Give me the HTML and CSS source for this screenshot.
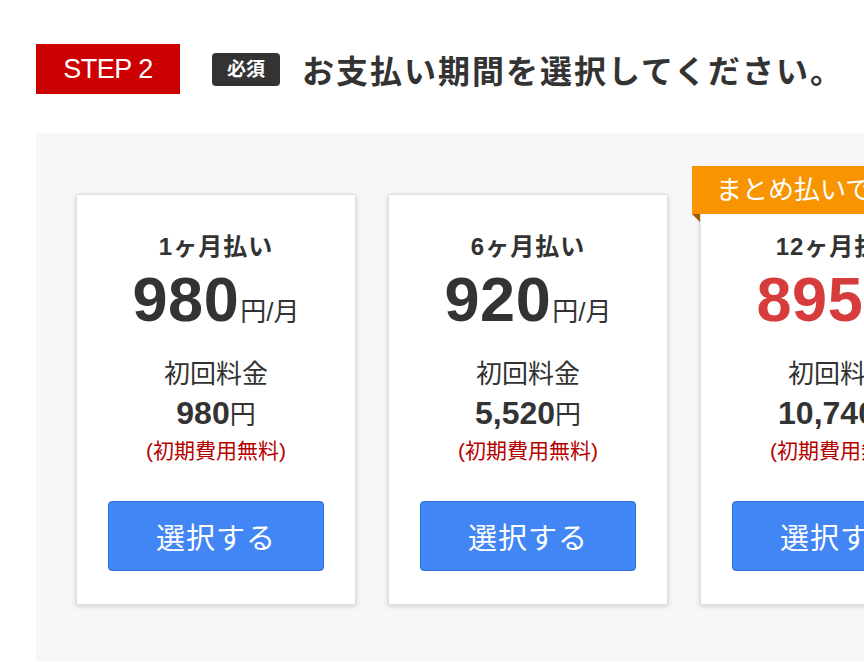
FILE: index.html
```html
<!DOCTYPE html>
<html lang="ja">
<head>
  <meta charset="UTF-8" />
  <meta name="viewport" content="width=device-width, initial-scale=1.0"/>
  <title>お支払い期間</title>
  <link rel="stylesheet" href="styles.css">
</head>
<body>
  <div class="step-head">
    <div class="step-label">STEP 2</div>
    <span class="required">必須</span>
    <h2>お支払い期間を選択してください。</h2>
  </div>

  <div class="plans">
    <div class="plan">
      <div class="plan-name">1ヶ月払い</div>
      <div class="price"><span class="num">980</span><span class="unit">円/月</span></div>
      <div class="first-label">初回料金</div>
      <div class="first-price"><span class="num">980</span>円</div>
      <div class="note">(初期費用無料)</div>
      <button class="select-btn">選択する</button>
    </div>

    <div class="plan">
      <div class="plan-name">6ヶ月払い</div>
      <div class="price"><span class="num">920</span><span class="unit">円/月</span></div>
      <div class="first-label">初回料金</div>
      <div class="first-price"><span class="num">5,520</span>円</div>
      <div class="note">(初期費用無料)</div>
      <button class="select-btn">選択する</button>
    </div>

    <div class="plan recommended">
      <div class="ribbon">まとめ払いでおトク！</div>
      <div class="plan-name">12ヶ月払い</div>
      <div class="price"><span class="num">895</span><span class="unit">円/月</span></div>
      <div class="first-label">初回料金</div>
      <div class="first-price"><span class="num">10,740</span>円</div>
      <div class="note">(初期費用無料)</div>
      <button class="select-btn">選択する</button>
    </div>
  </div>
</body>
</html>
```

FILE: styles.css
```css
body {
  margin: 0;
  background: #fff;
  font-family: 'Liberation Sans', 'Noto Sans CJK JP', sans-serif;
  color: #333;
  overflow: hidden;
}
.step-head {
  display: flex;
  align-items: center;
  padding: 44px 0 0 36px;
}
.step-label {
  width: 144px;
  height: 50px;
  line-height: 50px;
  background: #cc0000;
  color: #fff;
  font-size: 27px;
  text-align: center;
  letter-spacing: -0.5px;
}
.required {
  margin-left: 32px;
  width: 68px;
  height: 33px;
  line-height: 33px;
  background: #333;
  color: #fff;
  border-radius: 4px;
  text-align: center;
  font-size: 19px;
  font-weight: bold;
}
h2 {
  margin: 0 0 0 22px;
  font-size: 32px;
  font-weight: bold;
  color: #333;
  letter-spacing: 2px;
}
.plans {
  display: flex;
  gap: 32px;
  margin: 39px 0 0 36px;
  padding: 61px 0 56px 40px;
  background: #f7f7f7;
  width: 1200px;
}
.plan {
  position: relative;
  flex: 0 0 280px;
  height: 411px;
  box-sizing: border-box;
  background: #fff;
  border: 1px solid #e0e0e0;
  box-shadow: 0 1px 5px rgba(0, 0, 0, 0.18);
  text-align: center;
  padding-top: 33px;
}
.plan-name {
  font-size: 24px;
  font-weight: bold;
  line-height: 38px;
  letter-spacing: 1px;
}
.price {
  line-height: 66px;
}
.price .num {
  font-size: 63px;
  font-weight: bold;
  letter-spacing: 0.5px;
}
.price .unit {
  font-size: 26px;
  margin-left: 1px;
}
.recommended .price {
  color: #d63c3c;
}
.first-label {
  margin-top: 6px;
  font-size: 26px;
  line-height: 38px;
}
.first-price {
  font-size: 26px;
  line-height: 40px;
}
.first-price .num {
  font-size: 32px;
  font-weight: bold;
}
.note {
  color: #b50000;
  font-size: 21px;
  line-height: 32px;
}
.select-btn {
  margin-top: 34px;
  width: 216px;
  height: 70px;
  background: #4285f4;
  border: 1px solid #2a6fe0;
  border-radius: 4px;
  color: #fff;
  font-family: inherit;
  font-size: 29px;
  letter-spacing: 1px;
  cursor: pointer;
}
.ribbon {
  position: absolute;
  top: -29px;
  left: -9px;
  width: 300px;
  height: 48px;
  line-height: 48px;
  background: #f79400;
  color: #fff;
  font-size: 26px;
  text-align: left;
  padding-left: 24px;
  box-sizing: border-box;
  white-space: nowrap;
}
.ribbon::after {
  content: "";
  position: absolute;
  left: 0;
  bottom: -8px;
  border-top: 8px solid #a05a00;
  border-left: 8px solid transparent;
}
```
